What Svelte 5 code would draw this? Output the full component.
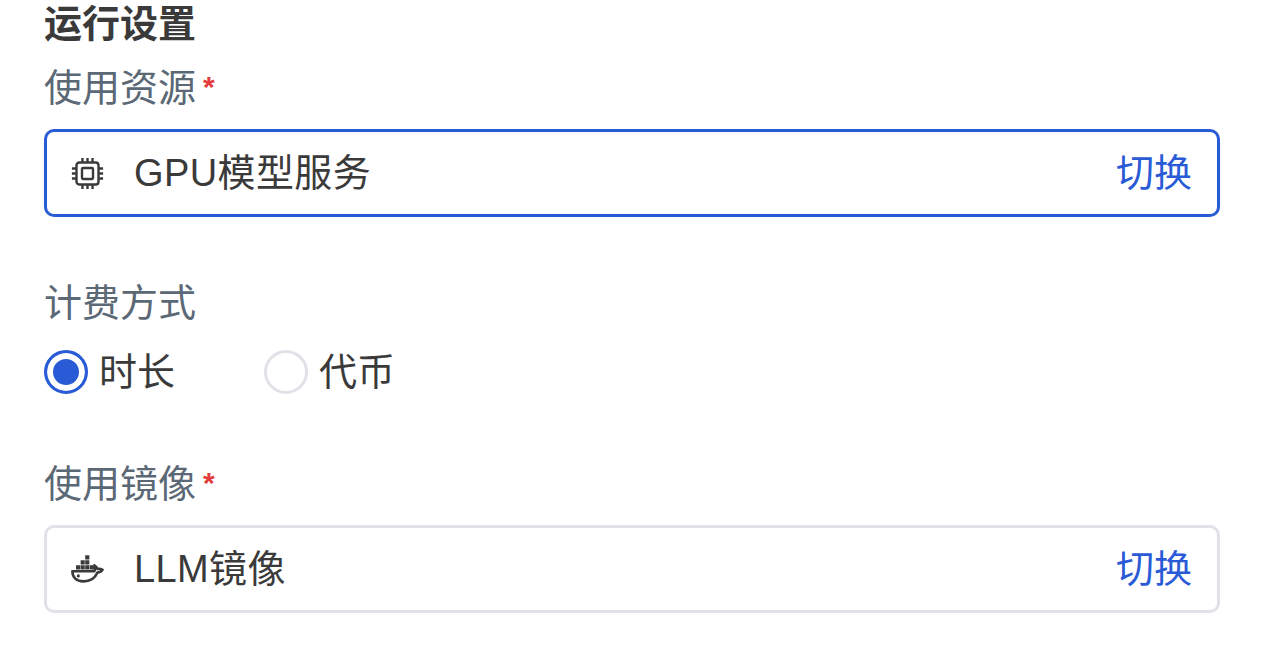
<script>
  let billing = $state('time');

  const billingOptions = [
    { id: 'time', label: '时长' },
    { id: 'token', label: '代币' }
  ];
</script>

<div class="page">
  <h2 class="title">运行设置</h2>

  <div class="label first">使用资源<span class="req">*</span></div>
  <div class="select active">
    <svg class="icon" viewBox="0 0 36 36" fill="none" stroke="currentColor" stroke-width="2.6">
      <rect x="6" y="6" width="24" height="24" rx="3" />
      <rect x="12" y="12" width="12" height="12" rx="1" />
      <path d="M12.5 1v5M18 1v5M23.5 1v5M12.5 30v5M18 30v5M23.5 30v5M1 12.5h5M1 18h5M1 23.5h5M30 12.5h5M30 18h5M30 23.5h5" />
    </svg>
    <span class="value">GPU模型服务</span>
    <span class="switch">切换</span>
  </div>

  <div class="label billing">计费方式</div>
  <div class="radios">
    {#each billingOptions as opt}
      <button class="radio" class:checked={billing === opt.id} onclick={() => (billing = opt.id)}>
        <span class="dot"></span>
        <span class="radio-text">{opt.label}</span>
      </button>
    {/each}
  </div>

  <div class="label image">使用镜像<span class="req">*</span></div>
  <div class="select">
    <svg class="icon docker" viewBox="0 0 36 30" fill="currentColor">
      <path d="M15.500 0h4.500v4.500h-4.500zM10.500 5.500h4.500v4.500h-4.500zM15.500 5.500h4.500v4.500h-4.500zM5.500 11h4.500v4.500h-4.500zM10.500 11h4.500v4.500h-4.500zM15.500 11h4.500v4.500h-4.500zM20.500 11h4.500v4.500h-4.500z" />
      <path fill="none" stroke="currentColor" stroke-width="2.800" stroke-linejoin="round" d="M1.500 17.500h24c1-2.500.5-5 0-6.500 1.600.8 3 2.200 3.300 4 1.800-.6 3.700-.4 5.700.8-1.200 2.200-3.200 3-5.700 3C26.500 24.500 21 28.500 13.500 28.500 6 28.500 1.500 24 1.500 17.500z" />
      <circle cx="8" cy="22.500" r="1.700" />
    </svg>
    <span class="value">LLM镜像</span>
    <span class="switch">切换</span>
  </div>
</div>

<style>
  :global(body) {
    background: #fff;
  }

  .page {
    padding: 0 52px 0 44px;
    font-family: "Liberation Sans", "Noto Sans CJK SC", sans-serif;
    font-size: 38px;
    height: 653px;
    box-sizing: border-box;
    overflow: hidden;
  }

  .title {
    margin: 0;
    font-size: 38px;
    font-weight: 700;
    line-height: 48px;
    color: #3a3a3a;
  }

  .label {
    line-height: 48px;
    color: #5b6876;
  }

  .label.first {
    margin-top: 16px;
    margin-bottom: 17px;
  }

  .label.billing {
    margin-top: 62px;
    margin-bottom: 21px;
  }

  .label.image {
    margin-top: 64px;
    margin-bottom: 17px;
  }

  .req {
    display: inline-block;
    color: #e23c3c;
    font-size: 30px;
    font-weight: 700;
    line-height: 30px;
    margin-left: 7px;
    vertical-align: 4px;
  }

  .select {
    display: flex;
    align-items: center;
    height: 88px;
    box-sizing: border-box;
    padding: 0 25px 0 24px;
    border: 3px solid #e0e2e8;
    border-radius: 10px;
    color: #3a3a3a;
  }

  .select.active {
    border-color: #2a5bd7;
  }

  .icon {
    width: 33px;
    height: 33px;
    flex: none;
    color: #3a3a3a;
  }

  .icon.docker {
    height: 28px;
  }

  .value {
    margin-left: 30px;
    flex: 1;
    padding-bottom: 8px;
    letter-spacing: 0.4px;
  }

  .switch {
    color: #2a5bd7;
    padding-bottom: 8px;
  }

  .radios {
    display: flex;
    gap: 89px;
    height: 48px;
  }

  .radio {
    display: flex;
    align-items: center;
    gap: 11px;
    padding: 0;
    background: none;
    border: none;
    font: inherit;
    color: #3a3a3a;
    cursor: pointer;
  }

  .radio-text {
    padding-bottom: 8px;
  }

  .dot {
    width: 44px;
    height: 44px;
    box-sizing: border-box;
    border-radius: 50%;
    border: 3px solid #e0e2e8;
    background: #fff;
  }

  .radio.checked .dot {
    border-color: #2a5bd7;
    background: #2a5bd7;
    box-shadow: inset 0 0 0 6px #fff;
  }
</style>
